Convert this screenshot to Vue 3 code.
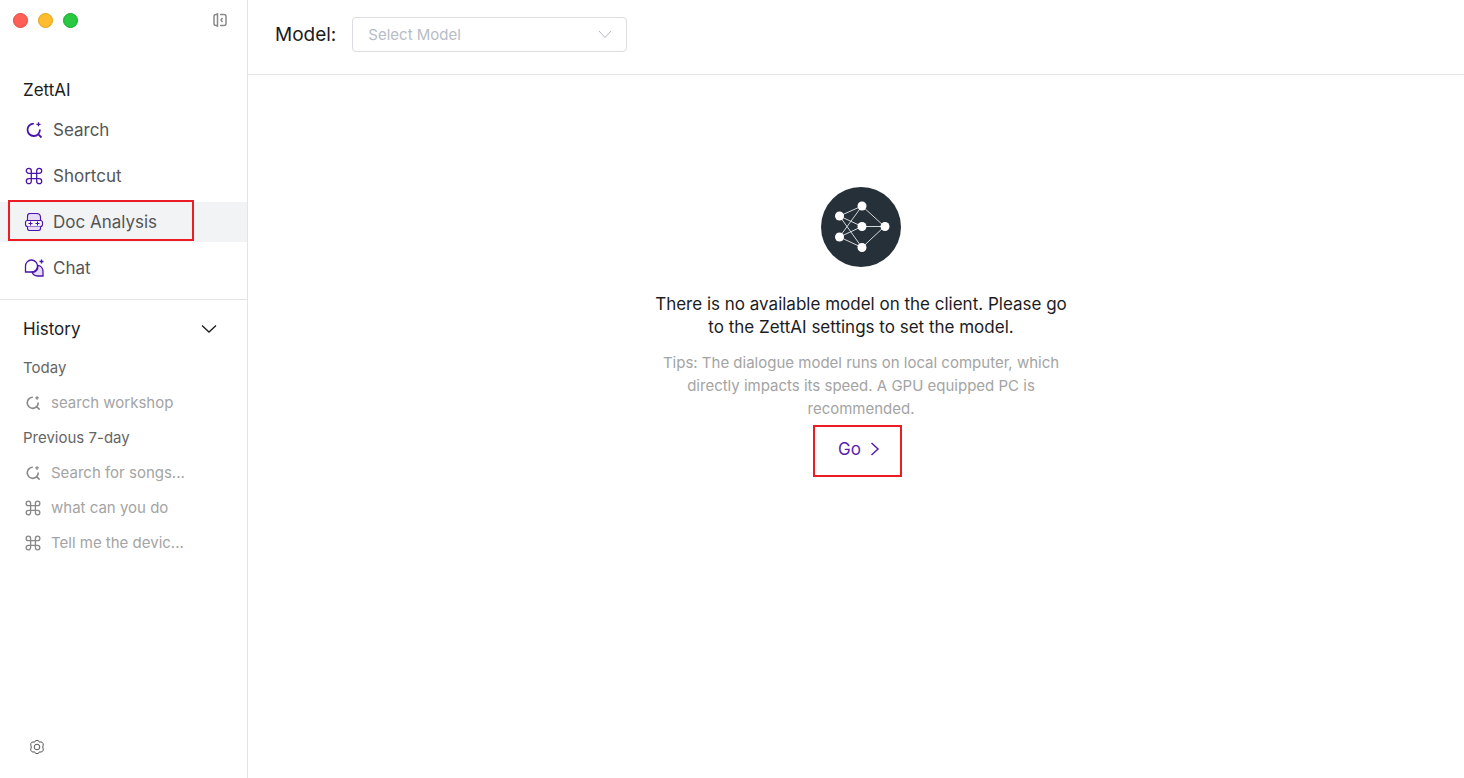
<template>
  <div class="app">
    <svg class="sprite" aria-hidden="true">
      <symbol id="icon-search" viewBox="0 0 18 18">
        <path stroke-width="1.8" d="M8.8 2.600A6.200 6.200 0 1 0 14.900 8.500M12.600 12.600l3.900 3.900" />
        <path d="M13.500 1.300v4M11.500 3.300h4" />
      </symbol>
      <symbol id="icon-shortcut" viewBox="0 0 18 18">
        <path d="M6.300 6.300h5.400v5.400H6.300zM6.300 6.300H3.800A2.500 2.500 0 1 1 6.300 3.800zM11.700 6.300V3.800a2.500 2.500 0 1 1 2.500 2.500zM11.700 11.700h2.500a2.500 2.500 0 1 1-2.500 2.500zM6.300 11.700v2.500a2.500 2.500 0 1 1-2.500-2.500z" />
      </symbol>
      <symbol id="icon-doc" viewBox="0 0 18 18">
        <path class="tint" stroke-width="1.1" d="M2.500 7.500V3.500q0-3 2.500-3h6.500q4 0 4 4v3z" />
        <path stroke-width="1.1" d="M2.500 7.500h13q2 0 2 2v2q0 2-2 2h-13q-2 0-2-2v-2q0-2 2-2z" />
        <path class="tint" stroke-width="1.1" d="M2.500 13.500v2q0 2 2 2h9q2 0 2-2v-2" />
        <path stroke-width="1" d="M5.500 8.500v4M3.500 10.500h4M12.500 8.500v4M10.500 10.500h4" />
      </symbol>
      <symbol id="icon-chat" viewBox="0 0 20 18">
        <path class="tint" d="M14 6.300a6 6 0 0 1 5 6V17h-5.500a6 6 0 0 1-5.500-3.700q6 .2 6-7z" />
        <path d="M1.500 13V7.200a6 6 0 1 1 6 5.800z" />
        <path d="M17.500 0.500v4M15.500 2.500h4" />
      </symbol>
    </svg>

    <aside class="sidebar">
      <div class="window-bar">
        <span class="dot red"></span>
        <span class="dot yellow"></span>
        <span class="dot green"></span>
        <button class="icon-btn collapse" aria-label="Collapse sidebar">
          <svg width="14" height="16" viewBox="0 0 14 16">
            <path d="M4.500 1v14M4.500 2.500H3Q1 2.500 1 4.500v7q0 2 2 2h1.500M7 2.500h4q2 0 2 2v7q0 2-2 2H7M9.500 6L8 8l1.500 2" />
          </svg>
        </button>
      </div>

      <h1 class="brand">ZettAI</h1>
      <nav class="menu">
        <a v-for="item in menu" :key="item.label" href="#" class="menu-item" :class="{ active: item.label === current }" @click.prevent="current = item.label">
          <svg class="menu-icon"><use :href="'#icon-' + item.icon" /></svg>
          <span>{{ item.label }}</span>
          <i v-if="item.marked" class="mark"></i>
        </a>
      </nav>

      <section class="history">
        <button class="history-head" :aria-expanded="showHistory" @click="showHistory = !showHistory">
          <span>History</span>
          <svg width="16" height="10" viewBox="0 0 16 10"><path d="M1 1.500l7 6.500 7-6.500" /></svg>
        </button>
        <template v-if="showHistory">
          <div v-for="group in history" :key="group.title">
            <h2 class="group-title">{{ group.title }}</h2>
            <a v-for="row in group.rows" :key="row.text" href="#" class="history-item" @click.prevent>
              <svg class="history-icon"><use :href="'#icon-' + row.icon" /></svg>
              <span>{{ row.text }}</span>
            </a>
          </div>
        </template>
      </section>

      <button class="icon-btn settings" aria-label="Settings">
        <svg width="16" height="16" viewBox="0 0 16 16">
          <path d="M5.500 3.200A2.600 2.600 0 0 1 10.500 3.200 2.600 2.600 0 0 1 14.200 6.200Q13.200 8 14.200 9.800A2.600 2.600 0 0 1 10.500 12.800 2.600 2.600 0 0 1 5.500 12.800 2.600 2.600 0 0 1 1.800 9.800Q2.800 8 1.800 6.200A2.600 2.600 0 0 1 5.500 3.200z" />
          <circle cx="8" cy="8" r="2.800" />
        </svg>
      </button>
    </aside>

    <main class="main">
      <header class="topbar">
        <label for="model">Model:</label>
        <div class="select-wrap">
          <select id="model" v-model="model">
            <option value="" disabled>Select Model</option>
          </select>
          <svg class="select-arrow" width="14" height="9" viewBox="0 0 14 9"><path d="M1 1l6 6.500L13 1" /></svg>
        </div>
      </header>

      <section class="empty">
        <svg class="logo" width="80" height="80" viewBox="0 0 80 80">
          <circle cx="40" cy="40" r="40" fill="#263038" />
          <path d="M18.500 29L41 19l22.500 20.500L41 60.500 18.500 50 41 39.500 18.500 29 41 60.500M18.500 50L41 19M41 39.500h22.500" />
          <g fill="#fff">
            <circle cx="41" cy="19" r="4.500" />
            <circle cx="18.500" cy="29" r="4.500" />
            <circle cx="18.500" cy="50" r="4.500" />
            <circle cx="41" cy="39.500" r="4.500" />
            <circle cx="64" cy="39.500" r="4.500" />
            <circle cx="41" cy="60.500" r="4.500" />
          </g>
        </svg>
        <p class="title">There is no available model on the client. Please go to the ZettAI settings to set the model.</p>
        <p class="tips">Tips: The dialogue model runs on local computer, which directly impacts its speed. A GPU equipped PC is recommended.</p>
        <button class="go">
          <span>Go</span>
          <svg width="10" height="14" viewBox="0 0 10 14"><path d="M1.500 1L8 7l-6.500 6" /></svg>
          <i class="mark"></i>
        </button>
      </section>
    </main>
  </div>
</template>

<script setup>
import { ref } from 'vue'

const current = ref('Doc Analysis')
const showHistory = ref(true)
const model = ref('')

const menu = [
  { label: 'Search', icon: 'search' },
  { label: 'Shortcut', icon: 'shortcut' },
  { label: 'Doc Analysis', icon: 'doc', marked: true },
  { label: 'Chat', icon: 'chat' }
]

const history = [
  { title: 'Today', rows: [{ text: 'search workshop', icon: 'search' }] },
  {
    title: 'Previous 7-day',
    rows: [
      { text: 'Search for songs...', icon: 'search' },
      { text: 'what can you do', icon: 'shortcut' },
      { text: 'Tell me the devic...', icon: 'shortcut' }
    ]
  }
]
</script>

<style>
body {
  margin: 0;
  background: #fff;
}
</style>

<style scoped>
.app {
  display: flex;
  min-height: 100vh;
  font-family: Inter, Roboto, 'Liberation Sans', sans-serif;
  color: #1c1c1e;
}
.app * {
  box-sizing: border-box;
}
svg {
  fill: none;
  stroke: currentColor;
  flex-shrink: 0;
}
.sprite {
  position: absolute;
  width: 0;
  height: 0;
}
button {
  padding: 0;
  border: 0;
  background: none;
  font: inherit;
  color: inherit;
  cursor: pointer;
}
h1, h2, p {
  margin: 0;
  font-weight: 400;
}
a {
  text-decoration: none;
}
.sidebar {
  flex: 0 0 248px;
  display: flex;
  flex-direction: column;
  border-right: 1px solid #e4e4e6;
}
.window-bar {
  display: flex;
  align-items: center;
  gap: 10px;
  height: 40px;
  padding: 0 20px 0 13px;
}
.dot {
  width: 15px;
  height: 15px;
  border-radius: 50%;
}
.red { background: #ff5f57; border: 1px solid #e2463f; }
.yellow { background: #febc2e; border: 1px solid #e1a116; }
.green { background: #28c840; border: 1px solid #12ac28; }
.icon-btn {
  display: flex;
}
.collapse {
  margin-left: auto;
  color: #8a8a8a;
}
.collapse svg {
  stroke-width: 1.500;
}
.brand {
  margin-top: 30px;
  padding-left: 23px;
  font-size: 17px;
  line-height: 40px;
}
.menu {
  display: flex;
  flex-direction: column;
  gap: 6px;
  padding-bottom: 11px;
  border-bottom: 1px solid #e4e4e6;
}
.menu-item {
  position: relative;
  display: flex;
  align-items: center;
  gap: 9px;
  height: 40px;
  padding-left: 24px;
  font-size: 17px;
  line-height: 22px;
  color: #555;
}
.menu-item.active {
  background: #f2f3f5;
}
.menu-icon {
  width: 20px;
  height: 18px;
  color: #4b14a8;
  stroke-width: 1.300;
}
.tint {
  fill: #e6dbf8;
}
.mark {
  position: absolute;
  border: 2px solid #ec1c24;
}
.menu-item .mark {
  left: 8px;
  top: -2px;
  width: 186px;
  height: 41px;
}
.history {
  padding: 8px 0 0 23px;
}
.history-head {
  display: flex;
  align-items: center;
  justify-content: space-between;
  width: 100%;
  height: 42px;
  padding-right: 30px;
  font-size: 17px;
  line-height: 22px;
}
.history-head svg {
  stroke-width: 1.300;
}
.group-title {
  font-size: 15px;
  line-height: 35px;
  color: #666;
}
.history-item {
  display: flex;
  align-items: center;
  gap: 10px;
  height: 35px;
  padding-left: 2px;
  font-size: 15px;
  line-height: 22px;
  color: #a4a4a4;
}
.history-icon {
  width: 16px;
  height: 16px;
  color: #888;
  stroke-width: 1.500;
}
.settings {
  margin: auto 0 23px 29px;
  width: 16px;
  color: #555;
}
.main {
  flex: 1;
  min-width: 0;
}
.topbar {
  display: flex;
  align-items: center;
  gap: 16px;
  height: 75px;
  padding: 0 27px 6px;
  border-bottom: 1px solid #e4e4e6;
  font-size: 19px;
}
.select-wrap {
  position: relative;
  width: 275px;
}
select {
  display: block;
  width: 100%;
  height: 35px;
  padding: 0 15px;
  border: 1px solid #dcdde4;
  border-radius: 4px;
  background: #fff;
  appearance: none;
  font-family: inherit;
  font-size: 15px;
  color: #b8bcc6;
}
.select-arrow {
  position: absolute;
  right: 15px;
  top: 13px;
  color: #b4b8c0;
  pointer-events: none;
}
.empty {
  display: flex;
  flex-direction: column;
  align-items: center;
  padding: 112px 0 0 10px;
  text-align: center;
}
.logo {
  stroke: none;
}
.logo path {
  stroke: #d5d8da;
}
.title {
  max-width: 424px;
  margin-top: 26px;
  font-size: 17px;
  line-height: 23px;
}
.tips {
  max-width: 400px;
  margin-top: 12px;
  font-size: 15px;
  line-height: 23px;
  color: #a4a4a4;
}
.go {
  position: relative;
  display: flex;
  align-items: center;
  gap: 9px;
  height: 52px;
  margin-top: 5px;
  padding: 0 4px 4px 0;
  font-size: 17px;
  color: #5a1fae;
}
.go svg {
  stroke-width: 1.500;
}
.go .mark {
  left: -25px;
  top: 0;
  width: 89px;
  height: 52px;
}
</style>
